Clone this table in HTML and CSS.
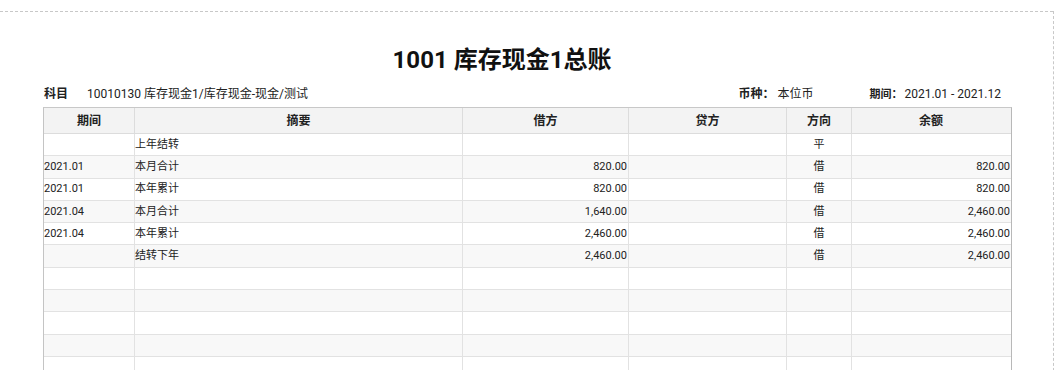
FILE: index.html
```html
<!DOCTYPE html>
<html lang="zh-CN">
<head>
<meta charset="utf-8">
<title>1001 库存现金1总账</title>
<link rel="stylesheet" href="styles.css">
</head>
<body>
<div class="frame">
  <div class="sheet">
    <h1 class="title">1001 库存现金1总账</h1>
    <div class="meta">
      <div class="meta-item subject"><span class="label">科目</span><span class="value">10010130 库存现金1/库存现金-现金/测试</span></div>
      <div class="meta-item currency"><span class="label">币种：</span><span class="value">本位币</span></div>
      <div class="meta-item period"><span class="label small">期间：</span><span class="value">2021.01 - 2021.12</span></div>
    </div>
    <div class="ledger">
      <div class="row head">
        <div class="cell">期间</div><div class="cell">摘要</div><div class="cell">借方</div><div class="cell">贷方</div><div class="cell">方向</div><div class="cell">余额</div>
      </div>
      <div class="row">
        <div class="cell period-col"></div><div class="cell text-col">上年结转</div><div class="cell num"></div><div class="cell num"></div><div class="cell dir">平</div><div class="cell num last"></div>
      </div>
      <div class="row">
        <div class="cell period-col">2021.01</div><div class="cell text-col">本月合计</div><div class="cell num">820.00</div><div class="cell num"></div><div class="cell dir">借</div><div class="cell num last">820.00</div>
      </div>
      <div class="row">
        <div class="cell period-col">2021.01</div><div class="cell text-col">本年累计</div><div class="cell num">820.00</div><div class="cell num"></div><div class="cell dir">借</div><div class="cell num last">820.00</div>
      </div>
      <div class="row">
        <div class="cell period-col">2021.04</div><div class="cell text-col">本月合计</div><div class="cell num">1,640.00</div><div class="cell num"></div><div class="cell dir">借</div><div class="cell num last">2,460.00</div>
      </div>
      <div class="row">
        <div class="cell period-col">2021.04</div><div class="cell text-col">本年累计</div><div class="cell num">2,460.00</div><div class="cell num"></div><div class="cell dir">借</div><div class="cell num last">2,460.00</div>
      </div>
      <div class="row">
        <div class="cell period-col"></div><div class="cell text-col">结转下年</div><div class="cell num">2,460.00</div><div class="cell num"></div><div class="cell dir">借</div><div class="cell num last">2,460.00</div>
      </div>
      <div class="row"><div class="cell"></div><div class="cell"></div><div class="cell"></div><div class="cell"></div><div class="cell"></div><div class="cell"></div></div>
      <div class="row"><div class="cell"></div><div class="cell"></div><div class="cell"></div><div class="cell"></div><div class="cell"></div><div class="cell"></div></div>
      <div class="row"><div class="cell"></div><div class="cell"></div><div class="cell"></div><div class="cell"></div><div class="cell"></div><div class="cell"></div></div>
      <div class="row"><div class="cell"></div><div class="cell"></div><div class="cell"></div><div class="cell"></div><div class="cell"></div><div class="cell"></div></div>
      <div class="row"><div class="cell"></div><div class="cell"></div><div class="cell"></div><div class="cell"></div><div class="cell"></div><div class="cell"></div></div>
    </div>
  </div>
</div>
</body>
</html>
```
FILE: styles.css
```css
html, body {
  margin: 0;
  padding: 0;
  background: #ffffff;
  overflow: hidden;
}

body {
  font-family: Roboto, "Noto Sans CJK SC", sans-serif;
  color: #222222;
}

.frame {
  width: 1053px;
  min-height: 100vh;
  border-right: 1px dashed #c8c8c8;
}

.sheet {
  margin-top: 11px;
  border-top: 1px dashed #c8c8c8;
  padding: 0 0 0 43px;
}

.title {
  margin: 32px 0 0 0;
  padding-right: 92px;
  font-size: 24px;
  line-height: 32px;
  font-weight: 700;
  text-align: center;
  color: #111111;
}

.meta {
  display: flex;
  align-items: baseline;
  margin-top: 10px;
  width: 957px;
  padding-left: 1px;
  font-size: 12px;
  line-height: 16px;
}

.meta-item {
  display: flex;
  align-items: baseline;
  white-space: nowrap;
}

.label {
  font-weight: 700;
}

.label.small {
  font-size: 11px;
}

.subject .label {
  margin-right: 19px;
}

.currency {
  margin-left: auto;
}

.currency .label {
  margin-right: 3px;
}

.period {
  margin-left: 56px;
}

.period .label {
  margin-right: 2px;
}

.ledger {
  margin-top: 4px;
  width: 967px;
  border-left: 1px solid #c4c4c4;
  border-right: 1px solid #b8b8b8;
  border-top: 1px solid #c8c8c8;
  font-size: 11px;
}

.row {
  display: grid;
  grid-template-columns: 91px 328px 166px 158px 65px 158px;
  height: 22.3px;
  box-sizing: border-box;
  border-bottom: 1px solid #e2e2e2;
  background: #ffffff;
}

.row:nth-child(odd) {
  background: #f8f8f8;
}

.row.head {
  height: 26px;
  background: #f3f3f3;
  border-bottom: 1px solid #dcdcdc;
  font-size: 12px;
  font-weight: 700;
}

.cell {
  display: flex;
  align-items: center;
  justify-content: flex-start;
  border-right: 1px solid #e2e2e2;
  overflow: visible;
  white-space: nowrap;
  padding: 0;
  line-height: 14px;
}

.cell:last-child {
  border-right: none;
}

.head .cell {
  justify-content: center;
  border-right-color: #dcdcdc;
}

.num {
  justify-content: flex-end;
  padding-right: 1px;
}

.num.last {
  padding-right: 0;
}

.dir {
  justify-content: center;
}
```
